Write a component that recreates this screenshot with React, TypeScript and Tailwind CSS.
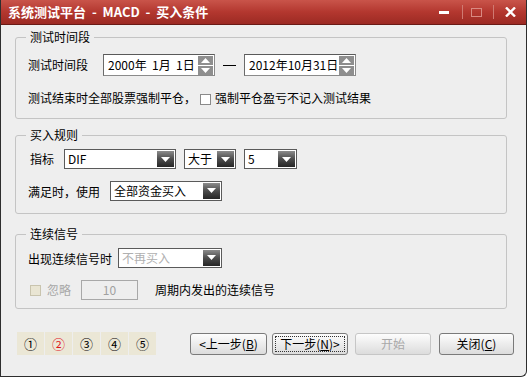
import type { ReactNode } from "react";

const font = "font-['SimSun','Noto_Sans_CJK_SC',sans-serif]";

function Arrow() {
  return (
    <span className="flex h-[16px] w-[17px] items-center justify-center bg-gradient-to-b from-[#8c8c8c] via-[#4c4c4c] to-[#262626]">
      <svg width="9" height="5" viewBox="0 0 9 5">
        <path d="M0 0h9L4.5 5z" fill="#fff" />
      </svg>
    </span>
  );
}

function Select({ value, width, disabled }: { value: string; width: string; disabled?: boolean }) {
  return (
    <div
      className={`flex h-[20px] items-center justify-between border border-[#5a5a5a] bg-white pl-[3px] pr-[1px] ${width}`}
    >
      <span className={disabled ? "text-[#b0b0b0]" : "text-black"}>{value}</span>
      <Arrow />
    </div>
  );
}

function DateBox({ value }: { value: string }) {
  return (
    <div className="flex h-[22px] w-[112px] items-center justify-between border border-[#8a8a8a] border-t-[#5a5a5a] border-l-[#6a6a6a] bg-white pl-[4px] pr-[1px]">
      <span className="whitespace-pre text-[12px] text-black">{value}</span>
      <span className="flex h-[19px] w-[15px] flex-col gap-[1px]">
        <span className="flex flex-1 items-center justify-center bg-[#8e8e8e]">
          <svg width="9" height="5" viewBox="0 0 9 5">
            <path d="M0 5h9L4.5 0z" fill="#fff" />
          </svg>
        </span>
        <span className="flex flex-1 items-center justify-center bg-[#8e8e8e]">
          <svg width="9" height="5" viewBox="0 0 9 5">
            <path d="M0 0h9L4.5 5z" fill="#fff" />
          </svg>
        </span>
      </span>
    </div>
  );
}

function Group({ title, children, className }: { title: string; children: ReactNode; className?: string }) {
  return (
    <fieldset className={`rounded-[3px] border border-[#c4c4c4] px-[12px] ${className ?? ""}`}>
      <legend className="-ml-[2px] px-[4px] text-[12px] leading-[16px]">{title}</legend>
      {children}
    </fieldset>
  );
}

function Btn({
  children,
  disabled,
  focus,
  className,
}: {
  children: ReactNode;
  disabled?: boolean;
  focus?: boolean;
  className?: string;
}) {
  return (
    <button
      className={`flex h-[22px] items-center justify-center rounded-[3px] border bg-gradient-to-b from-[#fdfdfd] to-[#dcdcdc] p-[2px] text-[12px] ${
        disabled ? "border-[#c6c6c6] text-[#a8a8a8]" : "border-[#7a7a7a] text-black"
      } ${className ?? ""}`}
    >
      <span
        className={`flex h-full w-full items-center justify-center ${
          focus ? "border border-dotted border-[#333]" : ""
        }`}
      >
        {children}
      </span>
    </button>
  );
}

export default function App() {
  const steps = ["①", "②", "③", "④", "⑤"];
  return (
    <div
      className={`flex h-[377px] w-[527px] flex-col overflow-hidden rounded-br-[6px] border-x border-b border-[#2e2e2e] bg-[#eeeeee] text-[12px] text-black ${font}`}
    >
      <div className="flex h-[25px] shrink-0 items-center border-b border-[#6a1a15] bg-gradient-to-b from-[#c9544a] via-[#b3372f] to-[#9c2a23] pl-[7px] pr-[10px]">
        <span className="whitespace-pre text-[13px] font-bold text-white">系统测试平台  -  MACD  -  买入条件</span>
        <div className="ml-auto flex items-center">
          <span className="h-[3px] w-[10px] bg-white" />
          <span className="ml-[13px] h-[14px] w-px bg-[#cf7a72]" />
          <span className="ml-[8px] h-[9px] w-[11px] border border-[#d98a82]" />
          <span className="ml-[11px] h-[14px] w-px bg-[#cf7a72]" />
          <svg className="ml-[11px]" width="11" height="10" viewBox="0 0 11 10">
            <path d="M1 0.5L10 9.5M10 0.5L1 9.5" stroke="#fff" strokeWidth="2.4" />
          </svg>
        </div>
      </div>

      <div className="flex flex-col pl-[14px] pr-[19px] pt-[4px]">
        <Group title="测试时间段" className="pb-[12px]">
          <div className="mt-[9px] flex items-center">
            <span className="w-[75px]">测试时间段</span>
            <DateBox value="2000年  1月  1日" />
            <span className="mx-[8px] h-px w-[13px] bg-black" />
            <DateBox value="2012年10月31日" />
          </div>
          <div className="mt-[14px] flex h-[16px] items-center">
            <span>测试结束时全部股票强制平仓，</span>
            <span className="ml-[4px] mt-[2px] h-[11px] w-[11px] border border-[#8a8a8a] bg-white" />
            <span className="ml-[4px]">强制平仓盈亏不记入测试结果</span>
          </div>
        </Group>

        <Group title="买入规则" className="mt-[8px] pb-[12px]">
          <div className="mt-[6px] flex items-center">
            <span className="ml-[2px] w-[34px]">指标</span>
            <Select value="DIF" width="w-[112px]" />
            <span className="w-[8px]" />
            <Select value="大于" width="w-[52px]" />
            <span className="w-[8px]" />
            <Select value="5" width="w-[53px]" />
          </div>
          <div className="mt-[11px] flex items-center">
            <span className="w-[82px] pt-[3px]">满足时，使用</span>
            <Select value="全部资金买入" width="w-[112px]" />
          </div>
        </Group>

        <Group title="连续信号" className="mt-[12px] pb-[8px]">
          <div className="mt-[5px] flex items-center">
            <span className="w-[90px] pt-[3px]">出现连续信号时</span>
            <Select value="不再买入" width="w-[104px]" disabled />
          </div>
          <div className="mt-[12px] flex items-center">
            <span className="ml-[2px] h-[11px] w-[11px] border border-[#c9c4ae] bg-[#e9e5d3]" />
            <span className="ml-[6px] text-[#a8a8a8]">忽略</span>
            <span className="ml-[10px] flex h-[20px] w-[57px] items-center justify-center border border-[#a8a8a8] text-[#a0a0a0]">
              10
            </span>
            <span className="ml-[17px]">周期内发出的连续信号</span>
          </div>
        </Group>

        <div className="mt-[23px] flex items-center">
          <div className="ml-[2px] flex h-[23px] gap-px">
            {steps.map((s, i) => (
              <span
                key={s}
                className={`flex w-[27px] items-center justify-center bg-[#ebe7d6] text-[13px] ${
                  i === 1 ? "text-[#e0141b]" : "text-black"
                }`}
              >
                {s}
              </span>
            ))}
          </div>
          <div className="-mr-[7px] ml-auto flex items-center">
            <Btn className="w-[77px]">
              &lt;上一步(<u>B</u>)
            </Btn>
            <Btn focus className="ml-[5px] w-[76px]">
              下一步(<u>N</u>)&gt;
            </Btn>
            <Btn disabled className="ml-[7px] w-[76px]">
              开始
            </Btn>
            <Btn className="ml-[8px] w-[75px]">
              关闭(<u>C</u>)
            </Btn>
          </div>
        </div>
      </div>
    </div>
  );
}
